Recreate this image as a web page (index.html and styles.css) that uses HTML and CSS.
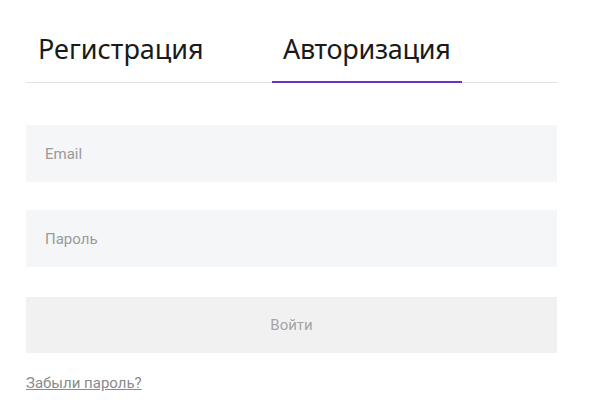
FILE: index.html
```html
<!DOCTYPE html>
<html lang="ru">
<head>
<meta charset="utf-8">
<link rel="stylesheet" href="styles.css">
</head>
<body>
<div class="auth">
  <div class="tabs">
    <div class="tab">Регистрация</div>
    <div class="tab active">Авторизация</div>
  </div>
  <form class="form">
    <div class="field">Email</div>
    <div class="field">Пароль</div>
    <div class="btn">Войти</div>
    <a class="forgot" href="#">Забыли пароль?</a>
  </form>
</div>
</body>
</html>
```
FILE: styles.css
```css
* { box-sizing: border-box; }
body {
  margin: 0;
  background: #fff;
  font-family: Roboto, "Liberation Sans", sans-serif;
}
.auth {
  width: 531px;
  margin-left: 26px;
  padding-top: 26px;
}
.tabs {
  display: flex;
  border-bottom: 1px solid #e2e2e4;
  height: 57px;
}
.tab {
  font-family: "Noto Sans", "Open Sans", sans-serif;
  font-size: 27px;
  color: #1a1a1a;
  padding: 0 12px;
  line-height: 46px;
}
.tab:first-child { width: 246px; }
.tab.active {
  border-bottom: 2px solid #6b2fd0;
  width: 190px;
  margin-bottom: -1px;
  padding-left: 11px;
  letter-spacing: -0.3px;
}
.form {
  display: flex;
  flex-direction: column;
  margin-top: 42px;
}
.field {
  height: 57px;
  background: #f5f6f8;
  color: #9a9a9a;
  font-size: 15px;
  padding-left: 19px;
  display: flex;
  align-items: center;
  margin-bottom: 28px;
}
.field + .field { margin-bottom: 30px; }
.btn {
  height: 56px;
  background: #f1f1f1;
  color: #a5a5a5;
  font-size: 15px;
  display: flex;
  align-items: center;
  justify-content: center;
}
.forgot {
  margin-top: 21px;
  font-size: 15px;
  color: #8a8a8a;
  text-decoration: underline;
  align-self: flex-start;
}
```
